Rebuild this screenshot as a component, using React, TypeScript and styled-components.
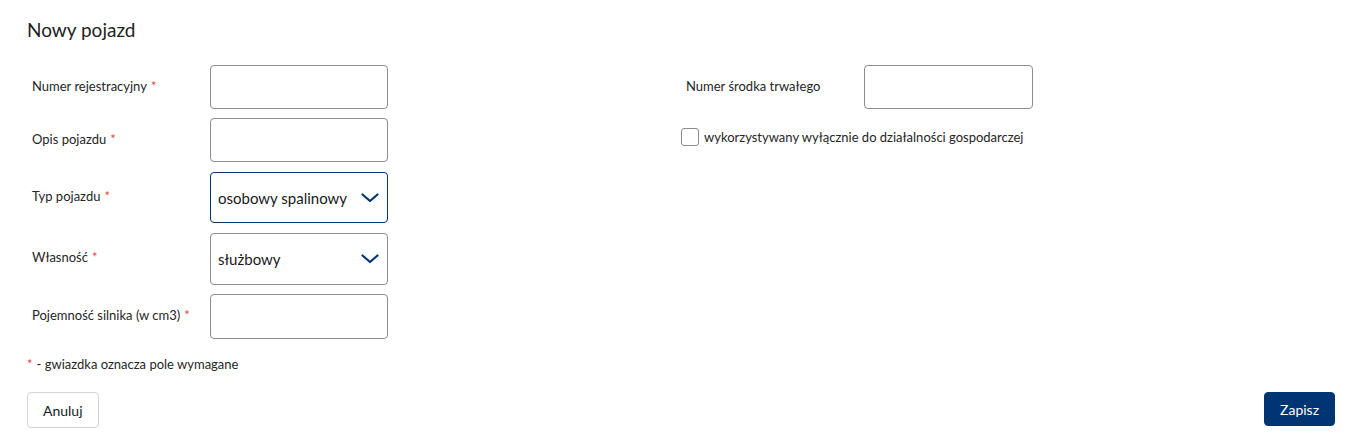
import React from "react";
import styled, { createGlobalStyle } from "styled-components";

const Global = createGlobalStyle`
  html, body { margin: 0; padding: 0; background: #fff; }
  body { font-family: Lato, "Noto Sans", sans-serif; color: #262626; }
  * { box-sizing: border-box; }
`;

const Page = styled.div`
  padding: 18px 35px 0 27px;
  display: flex;
  flex-direction: column;
`;

const Title = styled.h1`
  margin: 0;
  font-size: 19px;
  font-weight: 400;
  color: #222;
  line-height: 24px;
`;

const Columns = styled.div`
  margin-top: 23px;
  display: grid;
  grid-template-columns: 654px 654px;
`;

const Column = styled.div`
  display: flex;
  flex-direction: column;
  gap: 9px;
`;

const Row = styled.div`
  display: grid;
  grid-template-columns: 183px auto;
  align-items: center;
`;

const Label = styled.label`
  padding-left: 5px;
  padding-bottom: 3px;
  font-size: 13px;
  line-height: 16px;
  color: #262626;
`;

const Star = styled.span`
  color: #e2474b;
  margin-left: 4px;
`;

const Input = styled.input<{ $w: number; $h?: number }>`
  width: ${(p) => p.$w}px;
  height: ${(p) => p.$h ?? 44}px;
  border: 1px solid #8c8c8c;
  border-radius: 4px;
  background: #fff;
  font: inherit;
`;

const Select = styled.div<{ $focused?: boolean }>`
  width: 178px;
  height: ${(p) => (p.$focused ? 51 : 52)}px;
  margin-top: 1px;
  border: 1px solid ${(p) => (p.$focused ? "#003574" : "#8c8c8c")};
  border-radius: 4px;
  display: flex;
  align-items: center;
  justify-content: space-between;
  padding: 0 8px 0 7px;
  font-size: 15px;
  color: #1a1a1a;
`;

const CheckRow = styled.label`
  display: flex;
  align-items: center;
  gap: 5px;
  margin-top: 10px;
  font-size: 13px;
  color: #262626;
`;

const Box = styled.span`
  width: 18px;
  height: 18px;
  border: 1px solid #8c8c8c;
  border-radius: 3px;
  display: inline-block;
`;

const Note = styled.div`
  margin-top: 17px;
  font-size: 13px;
  color: #262626;
  line-height: 16px;
`;

const NoteStar = styled.span`
  color: #e2474b;
  margin-right: 4px;
`;

const Actions = styled.div`
  margin-top: 20px;
  display: flex;
  justify-content: space-between;
  align-items: flex-start;
`;

const Button = styled.button<{ $primary?: boolean }>`
  height: ${(p) => (p.$primary ? 34 : 36)}px;
  padding: 0 15px;
  border-radius: 4px;
  font-family: inherit;
  font-size: 14px;
  cursor: pointer;
  border: 1px solid ${(p) => (p.$primary ? "#003574" : "#d4d4d4")};
  background: ${(p) => (p.$primary ? "#003574" : "#fff")};
  color: ${(p) => (p.$primary ? "#fff" : "#1a1a1a")};
`;

const Chevron = () => (
  <svg width="18" height="10" viewBox="0 0 18 10" fill="none">
    <path d="M1.5 1.5 L9 8 L16.5 1.5" stroke="#003574" strokeWidth="2.2" strokeLinecap="round" strokeLinejoin="round" />
  </svg>
);

export default function App() {
  return (
    <>
      <Global />
      <Page>
        <Title>Nowy pojazd</Title>
        <Columns>
          <Column>
            <Row>
              <Label>Numer rejestracyjny<Star>*</Star></Label>
              <Input $w={178} />
            </Row>
            <Row>
              <Label>Opis pojazdu<Star>*</Star></Label>
              <Input $w={178} />
            </Row>
            <Row>
              <Label>Typ pojazdu<Star>*</Star></Label>
              <Select $focused>
                <span>osobowy spalinowy</span>
                <Chevron />
              </Select>
            </Row>
            <Row>
              <Label>Własność<Star>*</Star></Label>
              <Select>
                <span>służbowy</span>
                <Chevron />
              </Select>
            </Row>
            <Row>
              <Label>Pojemność silnika (w cm3)<Star>*</Star></Label>
              <Input $w={178} $h={45} />
            </Row>
          </Column>
          <Column>
            <Row>
              <Label>Numer środka trwałego</Label>
              <Input $w={169} />
            </Row>
            <CheckRow>
              <Box />
              wykorzystywany wyłącznie do działalności gospodarczej
            </CheckRow>
          </Column>
        </Columns>
        <Note><NoteStar>*</NoteStar>- gwiazdka oznacza pole wymagane</Note>
        <Actions>
          <Button>Anuluj</Button>
          <Button $primary>Zapisz</Button>
        </Actions>
      </Page>
    </>
  );
}
